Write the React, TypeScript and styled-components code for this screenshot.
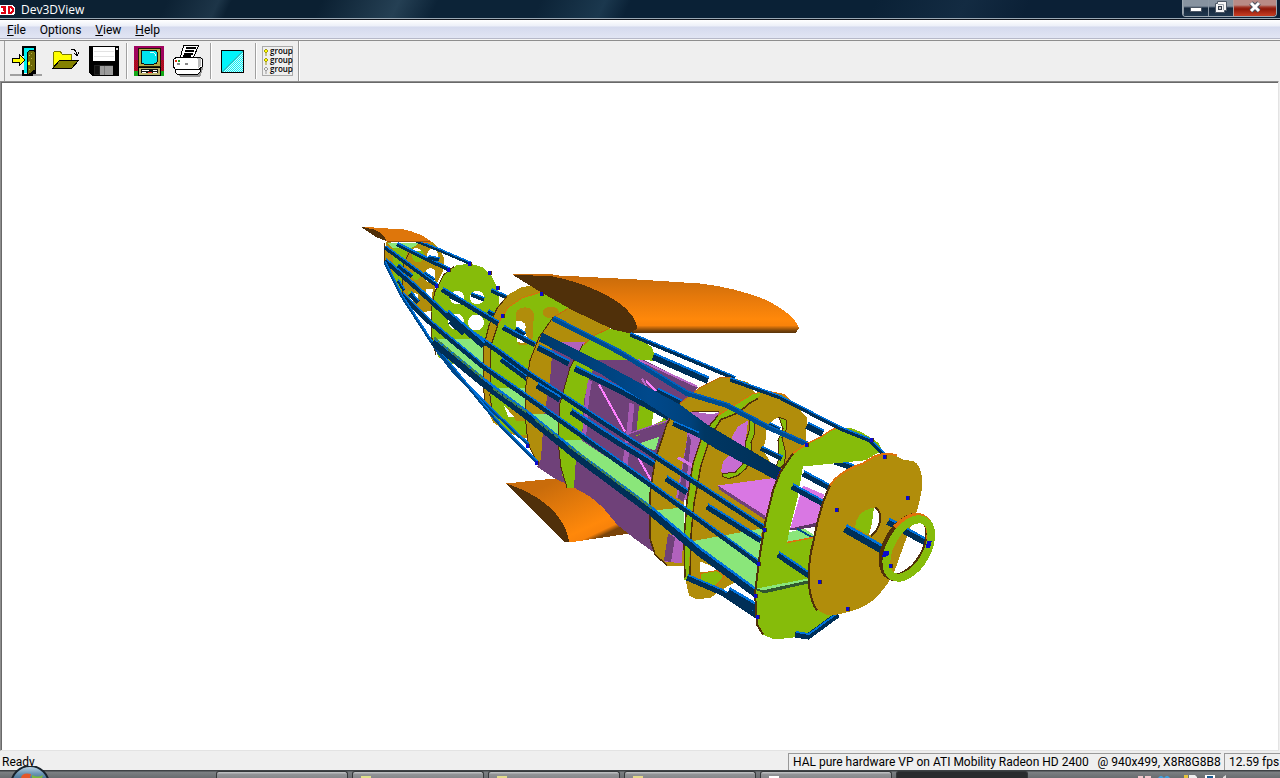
import React from 'react';
import styled, { createGlobalStyle } from 'styled-components';

const GlobalStyle = createGlobalStyle`
  html, body { margin: 0; padding: 0; overflow: hidden; }
  body, button { font-family: "Open Sans", "Segoe UI", sans-serif; font-size: 12px; color: #000; }
  * { box-sizing: border-box; }
`;

const Screen = styled.div`
  display: flex;
  flex-direction: column;
  height: 100vh;
  background: #efefef;
`;

const TitleBar = styled.header`
  display: flex;
  align-items: flex-start;
  height: 20px;
  flex: none;
  background: linear-gradient(115deg, #0c2133 0 13%, #1d3548 17%, #0b2032 18% 25%, #254054 31%, #0c2337 34% 42%, #1b384e 47%, #0a2136 49% 68%, #132b42 75%, #0b2036 80%);
  border-bottom: 1px solid #10141c;
  box-shadow: inset 0 -1px #9aa8b4;
`;
const AppTitle = styled.h1`
  display: flex;
  align-items: center;
  gap: 6px;
  flex: 1;
  margin: 0;
  height: 19px;
  font-size: 12px;
  font-weight: 400;
  color: #fff;
  svg { display: block; }
`;
const Caption = styled.div`
  display: flex;
  height: 17px;
  margin-right: 3px;
  border: 1px solid #9ba7b1;
  border-top: 0;
  border-radius: 0 0 4px 4px;
  overflow: hidden;
`;
const CaptionButton = styled.button<{ $close?: boolean }>`
  display: flex;
  align-items: flex-start;
  justify-content: center;
  width: ${p => (p.$close ? 43 : 25)}px;
  padding: 0;
  border: 0;
  border-left: ${p => (p.$close ? '1px solid #b39a97' : '1px solid #8c98a4')};
  background: ${p => p.$close
    ? 'linear-gradient(#b98b86 0 5px, #a33a2c 7px, #8e1708 9px, #c23a20 15px)'
    : 'linear-gradient(#8793a0 0 6px, #57677a 7px, #14263a 8px, #20374d 15px)'};
  svg { display: block; }
`;

const MenuBar = styled.nav`
  display: flex;
  height: 21px;
  flex: none;
  background: linear-gradient(#fff 0, #eceff8 6px, #d5daee 7px, #e0e4f3 17px);
  border-bottom: 1px solid #8e8e8e;
  box-shadow: inset 0 -1px #f6f6f6, inset 0 -2px #b6b8c8;
`;
const MenuItem = styled.button`
  padding: 0 7px;
  border: 0;
  background: none;
  font-family: Roboto, "Segoe UI", sans-serif;
  line-height: 16px;
`;

const ToolBar = styled.div`
  display: flex;
  align-items: center;
  align-self: flex-start;
  height: 40px;
  flex: none;
  padding-right: 2px;
  margin-left: 4px;
  border-left: 1px solid #a0a0a0;
  border-right: 1px solid #999;
  box-shadow: 1px 0 #fff;
`;
const ToolButton = styled.button`
  width: 39px;
  height: 38px;
  padding: 2px 3px 2px 4px;
  border: 0;
  background: none;
  svg { display: block; }
`;
const Divider = styled.span`
  width: 2px;
  height: 36px;
  margin-left: 4px;
  border-left: 1px solid #a0a0a0;
  background: #fff;
`;

const Viewport = styled.main`
  flex: 1;
  min-height: 0;
  background: #fff;
  border: 1px solid #8e8e8e;
  border-right-color: #e3e3e3;
  border-bottom-color: #e3e3e3;
  box-shadow: inset 1px 1px #696969;
  margin-right: 1px;
  svg { display: block; width: 100%; height: 100%; }
`;

const StatusBar = styled.footer`
  display: flex;
  align-items: flex-end;
  height: 19px;
  flex: none;
  font-family: Roboto, "Segoe UI", sans-serif;
  line-height: 16px;
  white-space: pre;
`;
const StatusText = styled.span`
  flex: 1;
  padding-left: 2px;
`;
const StatusPane = styled.span<{ $width: number }>`
  width: ${p => p.$width}px;
  flex: none;
  height: 17px;
  margin-right: 3px;
  padding-left: 4px;
  border-left: 1px solid #999;
  border-top: 1px solid #999;
  overflow: hidden;
  &:last-child { margin-right: 0; }
`;

const Taskbar = styled.div`
  display: flex;
  height: 8px;
  flex: none;
  background: linear-gradient(#3e4245 0 1px, #7c8083 2px, #686c6f);
`;
const Start = styled.button`
  width: 60px;
  height: 12px;
  margin: -4px 156px 0 0;
  padding: 0;
  border: 0;
  background: none;
  position: relative;
  svg { display: block; }
`;
const Task = styled.button<{ $active?: boolean }>`
  width: 132px;
  height: 7px;
  margin: 1px 4px 0 0;
  padding: 0 0 0 8px;
  border: 1px solid #35383a;
  border-bottom: 0;
  border-radius: 3px 3px 0 0;
  background: ${p => (p.$active ? '#292b2d' : 'linear-gradient(#bbbdbf 0 1px, #929497 2px, #85878a)')};
  svg { display: block; }
`;
const Tray = styled.div`
  margin-left: 104px;
  padding-top: 4px;
  svg { display: block; }
`;

const DARK = '#002f57';
const BRIGHT = '#0072dc';
const GREEN = '#86bc0a';
const GOLD = '#b18d0b';
const EDGE = '#50300a';
const MINT = '#8ae67a';
const VIOLET = '#6f4179';

type RodProps = { pts: string; w?: number; top?: string; side?: string };

/* A stringer: dark side face with its lit top face above it. */
const Rod = ({ pts, w = 5, top = BRIGHT, side = DARK }: RodProps) => (
  <g fill="none">
    <polyline points={pts} stroke={side} strokeWidth={w} />
    <polyline points={pts} stroke={top} strokeWidth={Math.max(1.4, w * 0.3)} transform={`translate(${w * 0.16} ${-w * 0.42})`} />
  </g>
);

const Pin = ({ x, y }: { x: number; y: number }) => (
  <g>
    <rect x={x - 2} y={y - 2} width="4" height="4" fill={EDGE} />
    <rect x={x - 2} y={y - 2} width="3" height="4" fill="#0a0ad0" />
  </g>
);

const Model = () => (
  <svg viewBox="1 82 1277 667" shapeRendering="crispEdges" role="img" aria-label="Fuselage model">
    <defs>
      <linearGradient id="wing" x1="0" y1="276" x2="0" y2="333" gradientUnits="userSpaceOnUse">
        <stop offset="0" stopColor="#c96c0b" /><stop offset=".4" stopColor="#e87a0b" /><stop offset=".75" stopColor="#ff880a" />
        <stop offset=".86" stopColor="#f8820a" /><stop offset=".95" stopColor="#7a440a" /><stop offset="1" stopColor={EDGE} />
      </linearGradient>
      <linearGradient id="lower" x1="560" y1="478" x2="590" y2="541" gradientUnits="userSpaceOnUse">
        <stop offset="0" stopColor="#c96c0b" /><stop offset=".8" stopColor="#ff880a" /><stop offset=".93" stopColor="#f8820a" /><stop offset="1" stopColor="#7a440a" />
      </linearGradient>
      <linearGradient id="spar" x1="540" y1="0" x2="782" y2="0" gradientUnits="userSpaceOnUse">
        <stop offset="0" stopColor="#003a6c" /><stop offset=".45" stopColor="#00498c" /><stop offset=".62" stopColor="#00427c" /><stop offset=".68" stopColor="#003763" /><stop offset="1" stopColor="#002f57" />
      </linearGradient>
    </defs>

    {/* tail section */}
    <path d="M386 241L384 262L391 278L395 286L400 244Z" fill={GOLD} />
    <path d="M393 243L420 245L409 300L402 294L393 279Z" fill={GREEN} />
    <path d="M387 242H422L412 247L392 247Z" fill={MINT} />
    <path fillRule="evenodd" fill={GOLD} d="M402 294L403 270L407 252L417 244L432 241L439 248L444 257L443 270L436 285L431 310L420 313L408 305ZM427 255a5 6 0 1 0 11 0a5 6 0 1 0-11 0M426 275a5 5 0 1 0 9 0a5 5 0 1 0-9 0M409 298L417 303L418 294L408 290ZM425 295L431 300L433 289L426 288Z" />
    <ellipse cx="418" cy="255" rx="6" ry="7" fill={GREEN} /><path d="M411 250q6-5 10 0l-6 1z" fill="#fff" />
    <ellipse cx="416" cy="275" rx="4" ry="5" fill={GREEN} />
    <path d="M384 242L384 263L404 300M402 294L404 262L411 249" stroke={EDGE} fill="none" />
    <Rod pts="407,237 440,250 470,263" w={3} /><Rod pts="397,244 425,258 449,269" w={4} />
    <Rod pts="398,265 412,276" w={4} /><Rod pts="410,293 418,302" w={5} /><Rod pts="428,257 439,259" w={4} />
    <Rod pts="398,280 404,290" w={3} /><Rod pts="424,273 434,280" w={4} />
    <path d="M360 226L388 228L404 229Q422 233 431 241L430 243L410 240L387 241Z" fill="#de760b" />
    <path d="M360 226L374 229Q384 233 387 241L377 237Z" fill={EDGE} />
    <path d="M387 241H430" stroke="#9b520a" />

    {/* first large bulkhead */}
    <path d="M431 334L431 311L435 291L444 273L456 265L470 263L483 267L492 276L498 289L500 310L497 326L487 338L484 380L447 363L438 356Z" fill={GREEN} />
    <path d="M433 338H486L484 380Z" fill={MINT} />
    <path d="M436 354L431 334L431 311L435 291L444 274L454 266" stroke={EDGE} fill="none" />
    <path d="M442 363H463L484 383V392Z" fill="#fff" />
    <g fill="#fff"><circle cx="457" cy="297" r="7" /><circle cx="477" cy="297" r="7" /><circle cx="456" cy="321" r="8" /><circle cx="476" cy="322" r="8" /></g>
    <Rod pts="471,294 484,299" w={4} /><Rod pts="450,295 463,302" w={5} /><Rod pts="450,321 464,333" w={5} />
    <Rod pts="491,290 509,298" w={4} /><Rod pts="488,311 503,319" w={4} />

    {/* second large bulkhead */}
    <path d="M483 385L484 345L489 325L497 307L507 295L521 287L535 284L555 296L565 320L530 439L510 433L493 422L486 408Z" fill={GOLD} />
    <path d="M490 395L491 345L498 324L508 307L523 297L540 292L562 299L580 315L530 435L518 434L503 429L493 412Z" fill={GREEN} />
    <path d="M486 408L483 385L484 345L489 325L497 308L507 296M493 417L490 395L491 345L498 324" stroke={EDGE} fill="none" />
    <path d="M498 324L508 307L523 297L540 292" stroke="#d96f0b" fill="none" />
    <path d="M516 318C514 312 518 307 524 307C532 306 536 313 534 319C531 325 534 329 533 336C531 343 526 347 519 344L516 339Z" fill={GOLD} />
    <path d="M516 320C526 320 527 325 525 330L527 337L523 343L517 341Z" fill="#fff" />
    <ellipse cx="551" cy="312" rx="8" ry="6" fill={GOLD} />
    <path d="M493 387H526V412Z" fill={MINT} /><path d="M506 407L517 421L526 420L519 411Z" fill={GOLD} /><path d="M504 405L514 416L508 416Z" fill="#fff" />
    <Rod pts="516,328 525,334" w={4} /><Rod pts="503,327 536,345" w={5} /><Rod pts="501,359 527,378" w={5} />

    {/* upper wing */}
    <path d="M512 274L540 274L637 279L700 283Q735 287 765 299Q795 314 799 328L795 333L629 332L590 300Z" fill="url(#wing)" />
    <path d="M513 274L535 274H553" stroke="#c96c0b" fill="none" />

    {/* cockpit section */}
    <path d="M506 483L555 478L565 482L592 493L630 533L569 542Z" fill="url(#lower)" />
    <path d="M506 483Q542 495 558 516Q568 530 569 541L565 542Z" fill={EDGE} />
    <path d="M526 410L526 380L529 360L538 337L553 317L568 308L585 312L612 329L590 345L560 440L543 465L537 462L528 443Z" fill={GOLD} />
    <path d="M553 341H590L698 387L670 420L652 482L654 552L633 537L617 524L603 507L590 496L572 486L553 477L537 466L541 458L544 415L550 380Z" fill={VIOLET} />
    <path d="M560 341H590L578 351Z" fill="#b162bd" />
    <path d="M527 413H557L560 439Z" fill={MINT} />
    <path d="M558 443L560 403L570 367L583 345L594 335L609 328L633 333L652 347L657 361L643 359L598 360L590 375L584 400L582 438L576 457L574 487H567L562 474Z" fill={GREEN} />
    <path d="M537 462L528 443L525 414L526 385L530 360L539 337L553 317M567 487L561 467L558 440L560 403L570 367L583 344" stroke={EDGE} fill="none" />
    <path d="M553 317L568 308M584 344L594 335L609 328" stroke="#c66a0b" fill="none" />
    <path d="M512 274L553 276Q592 284 620 303Q637 317 637 328L630 333L613 329L573 310L543 293Z" fill={EDGE} />
    <path d="M560 439H580L655 488L652 511Z" fill={MINT} />
    <g stroke="#a659b2" fill="none"><path d="M590 380L587 398L584 438" strokeWidth="4" /><path d="M632 403L628 440L625 464" strokeWidth="5" /></g>
    <path d="M639 405L661 413L667 421L636 436Z" fill={GREEN} /><path d="M653 412H665L662 420L652 425Z" fill="#fff" /><path d="M637 444L660 434L655 450Z" fill={MINT} />
    <path d="M629 435L669 423M626 445L660 434" stroke={VIOLET} strokeWidth="4" /><path d="M629 433L668 420" stroke="#a95bb4" />
    <path d="M599 384L625 431M633 448L653 483M646 380L657 392" stroke="#ff80ff" strokeWidth="2" />
    <path d="M643 359L697 386L690 400L650 382Z" fill={VIOLET} /><path d="M638 359L697 386M610 371L689 408M642 378L651 395" stroke="#bb69c7" strokeWidth="2" />
    <path d="M656 388L680 400L665 401Z" fill="#fff" />
    <Rod pts="630,334 735,378" w={4} /><Rod pts="653,356 708,380" w={7} /><Rod pts="657,390 681,402" w={5} />

    {/* forward gold frame */}
    <path d="M650 538L650 493L655 460L667 423L680 403L700 387L720 377H731L748 382L760 400L684 490L684 565H667L655 554Z" fill={GOLD} />
    <path d="M690 412L720 411L700 438L692 502L676 497L686 445Z" fill="#b162bd" /><path d="M688 433L678 498L684 502L691 440Z" fill={VIOLET} />
    <path d="M678 457L694 466" stroke="#d977e3" strokeWidth="3" />
    <path d="M692 411H720L713 414Z" fill="#fff" /><path d="M692 411H719" stroke={EDGE} />
    <path d="M652 510L684 507V537Z" fill={MINT} /><path d="M668 533L683 538L682 563L665 561Z" fill="#b162bd" /><path d="M668 533L675 537L671 562L664 560Z" fill={VIOLET} />
    <path d="M667 565L655 554L650 538L650 493L655 460L667 423L680 403" stroke={EDGE} fill="none" strokeWidth="1.5" />
    <path d="M680 403L700 387L720 377H731" stroke="#c66a0b" fill="none" />

    {/* instrument panel frame */}
    <path d="M685 577L684 540L687 500L693 463L703 433L718 415L737 403L753 393L768 391L783 394L796 405L807 417L806 441L785 470L757 570L720 590L711 597L697 599L689 595Z" fill={GOLD} />
    <path d="M684 580L685 535L688 500L694 463L705 431L720 414L738 403L752 393L762 392L758 397L747 403L738 412L721 419L710 434L700 465L693 503L690 535L689 578Z" fill={GREEN} />
    <path d="M685 577L684 540L687 500L693 463L703 433L718 415M690 577L691 535L694 503L701 465L711 435L721 419L739 412L749 403L758 398" stroke={EDGE} fill="none" strokeWidth="1.5" />
    <path d="M718 415L737 403L753 393L770 391L784 394L796 405" stroke="#dc700b" fill="none" />
    <path d="M748 420L738 426L732 436L735 450L723 461L721 471L727 476L739 472L748 462L746 438Z" fill="#c76dd2" />
    <path d="M750 418L755 421L754 435L751 442L752 456L746 468L738 475L729 478L722 476L722 473L735 472L744 462L746 440L749 431Z" fill={GREEN} stroke={EDGE} />
    <path d="M766 438C765 426 771 419 778 417L784 420L782 433L779 440L782 455L774 468L763 449Z" fill="#fff" />
    <path d="M779 417L786 419L787 428L782 437L786 454L784 464L774 474L779 457L778 440L783 428Z" fill={GREEN} stroke={EDGE} />
    <path d="M718 485L777 477L766 517Z" fill="#d977e3" /><path d="M718 485L765 515V519L719 489Z" fill={VIOLET} />
    <path d="M690 541L762 528L756 589Z" fill={MINT} />
    <path d="M700 561L720 569L706 573L700 571Z" fill="#fff" /><path d="M700 573L717 570L724 576L716 585L709 585L700 579Z" fill={GREEN} stroke="#d66e0b" />
    <path d="M735 581L756 599V601L735 591Z" fill="#fff" />
    <Rod pts="761,448 782,458" w={5} /><Rod pts="769,424 780,429" w={4} />

    {/* long stringers */}
    <Rod pts="385,247 437,285" w={4} /><Rod pts="442,289 498,323" w={5} />
    <Rod pts="385,260 415,286 450,318 500,352 530,374 640,446 765,528" w={5} />
    <Rod pts="447,313 484,345" w={7} />
    <Rod pts="402,294 430,322 483,366 532,400 580,434 650,484 700,520 759,563" w={5} />
    <Rod pts="385,262 402,296 437,350 454,372 487,405 528,444" w={3} side="#00498c" />
    <Rod pts="436,347 487,409 503,428 537,462" w={3} side="#00498c" />
    <Rod pts="433,341 483,382 527,415 580,458 650,510 700,552 756,593" w={8} />
    <path d="M434 337L483 378M493 388L527 412M535 419L558 437M568 445L652 508" stroke="#3f8050" strokeWidth="2" fill="none" strokeDasharray="5 1" />
    <Rod pts="538,347 569,363" w={6} /><Rod pts="575,368 620,390 669,417" w={6} />
    <Rod pts="537,385 560,399" w={6} /><Rod pts="571,411 615,440 654,464" w={6} />
    <Rod pts="666,478 687,492" w={6} /><Rod pts="707,506 761,540" w={6} />
    <path d="M542 332L600 361L680 404L707 424L783 469L779 481L717 449L690 432L667 416L600 373L539 341Z" fill="url(#spar)" />
    <Rod pts="673,423 698,434" w={5} />
    <path d="M780 468L783 471L779 481L776 479Z" fill="#0a0ad0" />
    <Rod pts="553,318 620,352 687,393 727,405 768,427 807,444" w={5} side="#004c90" top="#0062c0" />
    <Rod pts="687,577 722,592 758,616" w={6} /><Rod pts="728,591 757,608" w={8} />

    {/* front bulkhead and its opening */}
    <Rod pts="807,425 823,433" w={7} /><Rod pts="835,461 855,468" w={6} /><Rod pts="803,473 829,487" w={6} />
    <path d="M803 485L824 494L818 523L790 528Z" fill="#d977e3" /><path d="M790 528L818 522V526L790 530Z" fill="#5b3463" />
    <path d="M788 532L804 528L816 536L787 542Z" fill={MINT} /><path d="M797 528L814 538" stroke="#00498c" strokeWidth="2" />
    <path fillRule="evenodd" fill={GREEN} d="M755 593L760 553L765 523L773 490L780 472L793 453L807 443L820 437L832 429L850 427L862 432L872 438L879 443L882 450L868 458L836 612L815 630L793 637L774 639L763 634L757 624ZM803 466L873 459L818 536L787 542L790 527L797 500Z" />
    <path d="M763 634L757 624L755 593L760 553L765 523L773 490L780 472L793 453" stroke={EDGE} fill="none" strokeWidth="2" />
    <path d="M793 453L807 443L820 437L832 429L840 427M787 542L813 537" stroke="#de720b" fill="none" strokeWidth="1.5" />
    <path d="M755 589L808 579V583L764 593Z" fill="#31562f" /><path d="M757 588L808 578V580L762 590Z" fill={MINT} />
    <Rod pts="792,486 823,503" w={6} /><Rod pts="778,554 809,575" w={6} />
    <Rod pts="730,379 780,397 840,428 870,440 885,455" w={4} />
    <Rod pts="795,634 808,636 838,614" w={6} />

    {/* nose plate */}
    <path d="M885 453Q895 454 903 459L914 461Q923 466 922 487Q919 510 903 550Q893 581 875 598Q861 611 830 615Q815 612 810 597Q806 575 813 543Q820 505 830 485Q840 470 863 463L874 457Z" fill={GOLD} />
    <path d="M817 610Q811 602 809 585Q808 560 813 543Q820 505 830 485" stroke={EDGE} strokeWidth="2" fill="none" />
    <path d="M830 485Q840 470 863 463L874 456L885 453Q892 453 897 455" stroke="#de720b" fill="none" strokeWidth="2" />
    <ellipse cx="868" cy="522" rx="13" ry="16" fill={GOLD} />
    <path d="M873 507Q882 512 880 523Q877 533 869 535L872 522Z" fill="#fff" />
    <path d="M874 507C862 509 856 516 855 527L868 534L872 522Z" fill={GREEN} />
    <path d="M875 507C883 512 882 526 871 536" fill="none" stroke={EDGE} strokeWidth="2" />
    <Rod pts="845,528 887,552" w={8} />
    <path d="M911 525L923 522L925 540L907 568L894 572Z" fill="#fff" />
    <Rod pts="888,521 928,543" w={7} />
    <g fill="none" transform="rotate(30 907 547)">
      <ellipse cx="906" cy="547" rx="19" ry="33" stroke={EDGE} strokeWidth="8" />
      <path d="M888 536Q894 514 906 514Q918 514 923 529" stroke="#df730b" strokeWidth="8" />
      <ellipse cx="908" cy="547" rx="17" ry="31" stroke="#df730b" strokeWidth="7" strokeDasharray="0 65 40 100" />
      <ellipse cx="909" cy="547" rx="18" ry="32" stroke={GREEN} strokeWidth="8" />
    </g>
    <path d="M884 550H889V554L886 556H882ZM927 540H932L930 547H926Z" fill="#0a0ad0" />
    {[[837, 509], [908, 497], [820, 581], [848, 608], [891, 565], [885, 456], [872, 439], [807, 444], [765, 529], [759, 563], [756, 595], [758, 616], [498, 287], [470, 263], [449, 269], [437, 285], [503, 315], [542, 293], [528, 445], [537, 462], [490, 272]].map(([x, y]) => <Pin key={`${x}-${y}`} x={x} y={y} />)}
  </svg>
);

const ExitIcon = () => (
  <svg width="33" height="32" viewBox="0 0 33 32" shapeRendering="crispEdges">
    <path d="M1 29H33V31H1Z" fill="#a0a0a0" /><path d="M13 1H27V29H24V31H13V25H15V29H18V4H15V11H13Z" fill="#000" />
    <path d="M15 3H25V6H22L18 9V28H15Z" fill="#00f0f0" /><path d="M18 8L21 5H24L26 7V25L19 30Z" fill="#6e6908" stroke="#000" />
    <path d="M20 10h1v1h-1zm2 3h1v1h-1zm-2 3h1v1h-1zm2-8h1v1h-1zm0 12h1v1h-1zm-2 4h1v1h-1z" fill="#bdb545" /><path d="M19 17h2v3h-2z" fill="#ff0" />
    <path d="M3 13H10V9L16 15L10 21V17H3Z" fill="#ff0" stroke="#000" />
  </svg>
);
const FolderIcon = () => (
  <svg width="32" height="32" viewBox="0 0 32 32" shapeRendering="crispEdges">
    <path d="M5 23V8L7 6H12L14 9H23V15H12Z" fill="#ff0" stroke="#7b7a00" />
    <path d="M5 23L12 15H31L24 23Z" fill="#848200" stroke="#000" /><path d="M23 5Q28 3 29 10M26 8L29 11L31 7" fill="none" stroke="#000" />
  </svg>
);
const FloppyIcon = () => (
  <svg width="32" height="32" viewBox="0 0 32 32" shapeRendering="crispEdges">
    <path d="M2 1H32V31H5L2 28Z" /><path d="M6 2H28V16H6Z" fill="#fff" /><path d="M7 6.500H27M7 11.500H27" stroke="#e2e2e2" />
    <path d="M7 20H26V30H7Z" fill="#222" /><path d="M13 21H26V30H13Z" fill="#9a9a9a" /><path d="M8 21H12V29H8Z" fill="#111" /><path d="M17 21H18V30H17Z" fill="#777" /><path d="M29 3h2v2h-2z" fill="#ddd" />
  </svg>
);
const MonitorIcon = () => (
  <svg width="32" height="32" viewBox="0 0 32 32" shapeRendering="crispEdges">
    <defs><pattern id="dither" width="2" height="2" patternUnits="userSpaceOnUse"><path d="M0 0h1v1H0zM1 1h1v1H1z" fill="#d0101c" /></pattern></defs>
    <path d="M2 1H32V31H2Z" fill="#900074" /><path d="M2 15H32V26H2Z" fill="#a20b24" /><path d="M2 1H32V26H2Z" fill="url(#dither)" opacity=".5" /><path d="M2 26H32V31H2Z" fill="#14a818" />
    <path d="M6 3H28V21H6Z" fill="#b6aa46" stroke="#221c04" /><path d="M9 7Q9 5 12 5H22Q25 5 25 7V17Q25 19 22 19H12Q9 19 9 17Z" fill="#00e4ee" stroke="#111" />
    <path d="M18 7H21L23 9V11" fill="none" stroke="#d8ffff" /><path d="M6 22H28V30H6Z" fill="#bbb16b" stroke="#000" /><path d="M9 24H26V28H9Z" fill="#111" /><path d="M10 25H17M21 25H25M10 27H14M21 27H25" stroke="#fff" /><path d="M16 27H20" stroke="#f22" />
  </svg>
);
const PrinterIcon = () => (
  <svg width="33" height="33" viewBox="0 0 33 33" shapeRendering="crispEdges">
    <path d="M5 26L9 32H29L32 24V13L28 15Z" fill="#999" />
    <path d="M9 13L13 0H28L22 13Z" fill="#fff" stroke="#000" /><path d="M15 3H25M14 6H23M13 9H22M12 11H20" stroke="#000" strokeWidth="1.5" />
    <path d="M3 14L6 12H29L31 14V22L28 24H4L2 21Z" fill="#fff" stroke="#000" /><path d="M25 13H29L30 14V21L27 23V15Z" fill="#bbb" />
    <path d="M4 16H6" stroke="#e03010" strokeWidth="2" /><path d="M7 16H9" stroke="#20a020" strokeWidth="2" /><path d="M6 19H9M14 19H17" stroke="#888" strokeWidth="2" />
    <path d="M4 24V27L6 29H27L29 27V24Z" fill="#fff" stroke="#000" />
  </svg>
);
const ShadeIcon = () => (
  <svg width="32" height="32" viewBox="0 0 32 32" shapeRendering="crispEdges">
    <defs><pattern id="mesh" width="2" height="2" patternUnits="userSpaceOnUse"><path d="M0 0h1v1H0zM1 1h1v1H1z" fill="#ddf4f4" /></pattern></defs>
    <path d="M5 5H28V28H5Z" fill="#00f4fa" /><path d="M6 27L28 5V28Z" fill="url(#mesh)" /><path d="M5 28L28 5" stroke="#48a4a8" /><path d="M5.500 5.500H27.500V27.500H5.500Z" fill="none" stroke="#000" />
  </svg>
);
const GroupIcon = () => (
  <svg width="32" height="32" viewBox="0 0 32 32">
    <path d="M1.500 1.500H31.500V30.500H1.500Z" fill="#efefef" stroke="#aaa" shapeRendering="crispEdges" />
    {[6, 15, 24].map((y, i) => (
      <g key={y}>
        <path d={`M3 ${y}l2-2 2 2-2 2zm2 2v3`} fill={i < 2 ? '#ff0' : '#eee'} stroke={i < 2 ? '#a39a12' : '#999'} />
        <text x="9" y={y + 3} fontFamily="Open Sans, sans-serif" fontWeight="600" fontSize="8">group</text>
      </g>
    ))}
  </svg>
);

const Tool = ({ label, children }: { label: string; children: React.ReactNode }) => (
  <ToolButton type="button" aria-label={label}>{children}</ToolButton>
);

const menus = [['F', 'ile'], ['', 'Options'], ['V', 'iew'], ['H', 'elp']];
const taskColors = ['', '#dfe08a', '#e2dc8c', '#e5d98a', '#fff'];

export default function App() {
  return (
    <Screen>
      <GlobalStyle />
      <TitleBar>
        <AppTitle>
          <svg width="15" height="10" viewBox="0 0 15 10" shapeRendering="crispEdges">
            <path d="M0 0H13L15 3V8L13 10H0Z" fill="#fff" />
            <path d="M1 2H5V4H3M5 4V8H1M3 5H5" fill="none" stroke="#e00010" strokeWidth="2" />
            <path d="M9 2H11L13 4V6L11 8H9Z" fill="none" stroke="#e00010" strokeWidth="2" />
          </svg>
          Dev3DView
        </AppTitle>
        <Caption>
          <CaptionButton type="button" aria-label="Minimize">
            <svg width="24" height="15"><rect x="6.500" y="7.500" width="11" height="4" fill="#fff" stroke="#4b5664" /></svg>
          </CaptionButton>
          <CaptionButton type="button" aria-label="Restore">
            <svg width="24" height="15"><path d="M8.500 1.500H17.500V10.500H15.500V12.500H6.500V3.500H8.500Z" fill="#f5f5f5" stroke="#4b5664" /><path d="M9 4.500H14.500V10" fill="none" stroke="#9aa3ac" /><rect x="9.500" y="6.500" width="3" height="3" fill="#ccc" stroke="#333d4b" /></svg>
          </CaptionButton>
          <CaptionButton type="button" $close aria-label="Close">
            <svg width="42" height="15"><path d="M17 3L25 11M25 3L17 11" stroke="#48505c" strokeWidth="5" /><path d="M17 3L25 11M25 3L17 11" stroke="#fff" strokeWidth="3" /></svg>
          </CaptionButton>
        </Caption>
      </TitleBar>
      <MenuBar>
        {menus.map(([key, rest]) => <MenuItem type="button" key={rest}>{key && <u>{key}</u>}{rest}</MenuItem>)}
      </MenuBar>
      <ToolBar role="toolbar">
        <Tool label="Exit"><ExitIcon /></Tool>
        <Tool label="Open"><FolderIcon /></Tool>
        <Tool label="Save"><FloppyIcon /></Tool>
        <Divider />
        <Tool label="Display"><MonitorIcon /></Tool>
        <Tool label="Print"><PrinterIcon /></Tool>
        <Divider />
        <Tool label="Shading"><ShadeIcon /></Tool>
        <Divider />
        <Tool label="Groups"><GroupIcon /></Tool>
      </ToolBar>
      <Viewport><Model /></Viewport>
      <StatusBar>
        <StatusText>Ready</StatusText>
        <StatusPane $width={433}>{'HAL pure hardware VP on ATI Mobility Radeon HD 2400   @ 940x499, X8R8G8B8 (D24X8)'}</StatusPane>
        <StatusPane $width={56}>12.59 fps</StatusPane>
      </StatusBar>
      <Taskbar>
        <Start type="button" aria-label="Start">
          <svg width="60" height="12">
            <defs><linearGradient id="orb" x1="0" y1="0" x2="0" y2="1"><stop offset="0" stopColor="#c5dbea" /><stop offset=".2" stopColor="#6b96b5" /><stop offset=".5" stopColor="#1f4b70" /></linearGradient></defs>
            <circle cx="30" cy="19" r="19" fill="url(#orb)" stroke="#18232c" strokeWidth="2" />
            <path d="M21 12Q22 6 31 8L30 12Z" fill="#e4572a" /><path d="M32 9Q38 12 43 9L42 12H32Z" fill="#7cb83c" />
          </svg>
        </Start>
        {[0, 1, 2, 3, 4].map(i => (
          <Task type="button" key={i} aria-label={`Window ${i + 1}`}>
            {taskColors[i] && <svg width="14" height="6"><rect x="0" y="4" width="10" height="2" fill={taskColors[i]} /></svg>}
          </Task>
        ))}
        <Task type="button" $active aria-label="Dev3DView" />
        <Tray>
          <svg width="100" height="4"><path d="M2 2H7V4H2ZM9 2H15V4H9Z" fill="#f3c7cc" /><path d="M22 4L24 2H26L28 4L30 2H32L34 4Z" fill="#42a0dc" /><path d="M48 1H52V4H48Z" fill="#e8c53c" /><path d="M53 1H59L61 3V4H53Z" fill="#eee" /><path d="M69 1H79V4H69Z" fill="#fff" /><path d="M71 2H77V4H71Z" fill="#17598e" /><path d="M87 3L90 1V4H87Z" fill="#ddd" /></svg>
        </Tray>
      </Taskbar>
    </Screen>
  );
}
